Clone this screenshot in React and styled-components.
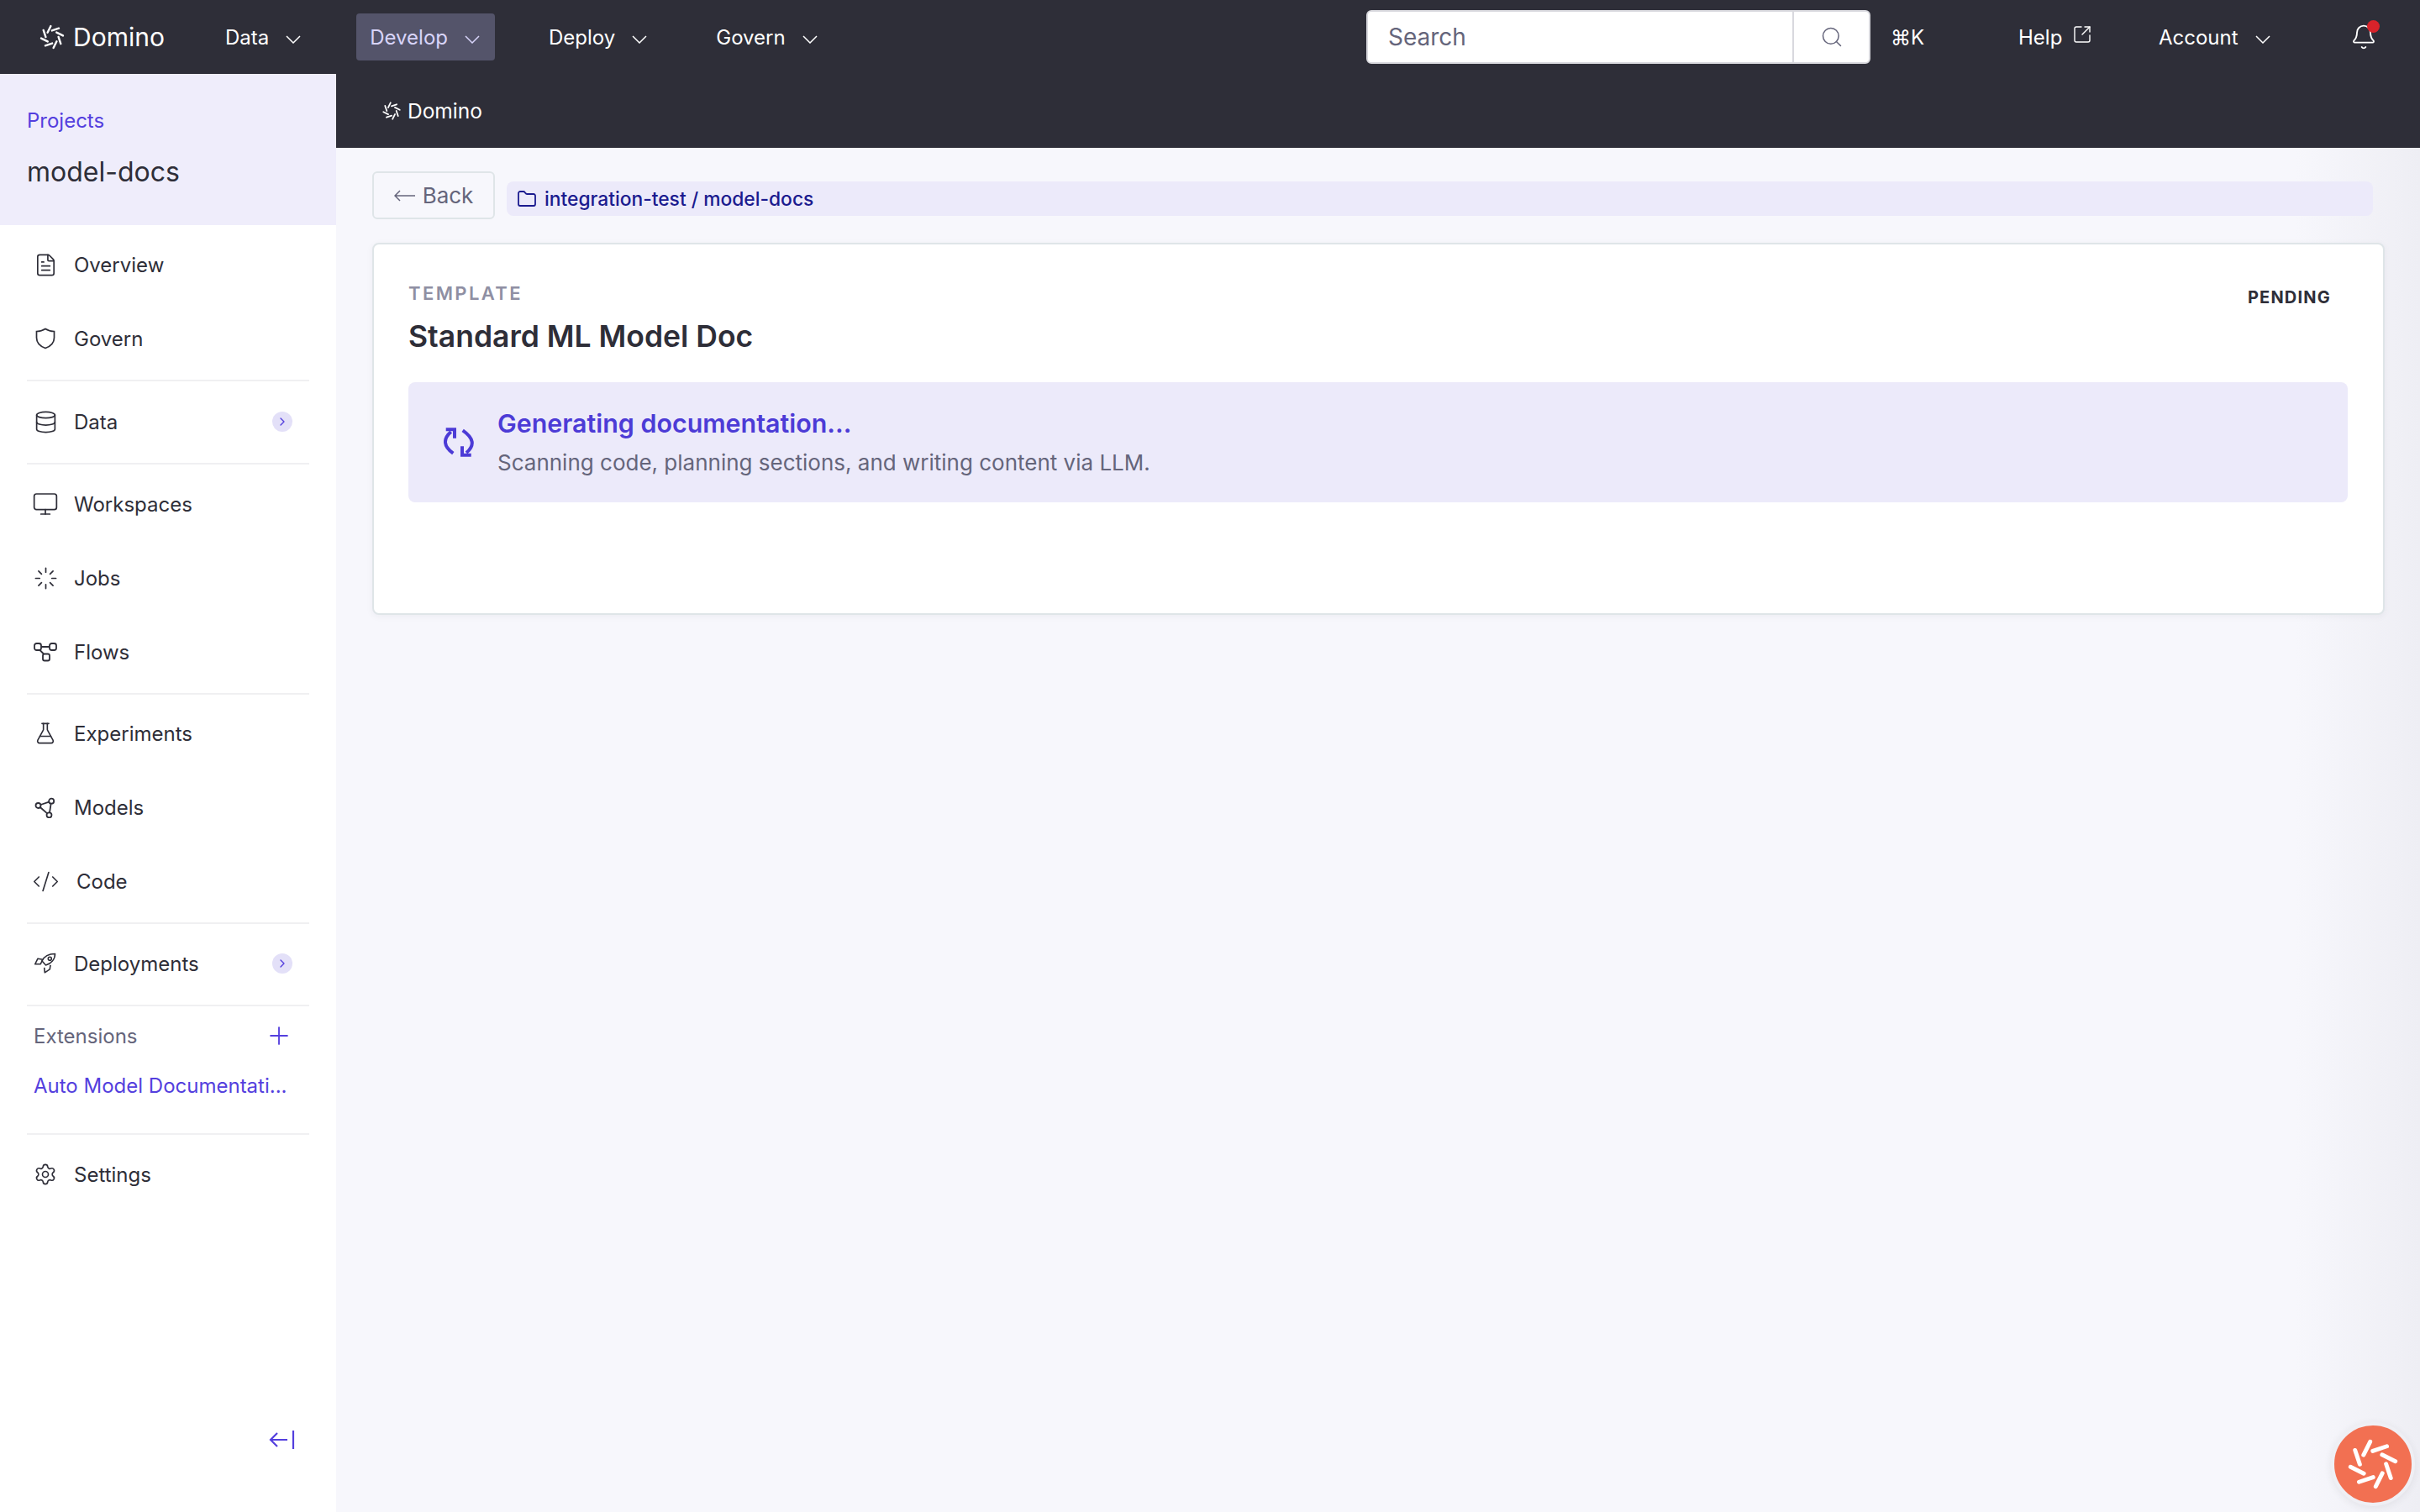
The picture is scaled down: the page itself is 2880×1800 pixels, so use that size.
import React from 'react'
import styled, { createGlobalStyle } from 'styled-components'
import { FileText, Database, Monitor, Loader, FlaskConical, CodeXml, Settings, ChevronRight, Search, Bell, SquareArrowOutUpRight, Folder, Plus } from 'lucide-react'

const GlobalStyle = createGlobalStyle`
  html, body {
    margin: 0;
    padding: 0;
    background: #f7f7fc;
    font-family: Inter, 'Liberation Sans', sans-serif;
    color: #2e2e38;
  }
  * {
    box-sizing: border-box;
  }
`

const Page = styled.div`
  width: 2880px;
  height: 1800px;
  display: flex;
  flex-direction: column;
  overflow: hidden;
  position: relative;
`

const TopBar = styled.header`
  height: 88px;
  flex: none;
  display: flex;
  align-items: center;
  background: #2e2e38;
  color: #fff;
`

const Brand = styled.div`
  width: 236px;
  padding-left: 46px;
  display: flex;
  align-items: center;
  gap: 9px;
  font-size: 30px;
`

const MainNav = styled.nav`
  display: flex;
  align-items: center;
  gap: 48px;
  margin-left: 16px;
`

const NavItem = styled.div`
  height: 56px;
  padding: 0 18px 0 16px;
  display: flex;
  align-items: center;
  gap: 20px;
  font-size: 24px;
  border-radius: 4px;
  background: ${(p) => (p.$active ? '#54546a' : 'transparent')};
  color: ${(p) => (p.$active ? '#d8d4fa' : '#fff')};
`

const CaretSvg = styled.svg`
  width: 18px;
  height: 10px;
  margin-top: 5px;
  flex: none;
`

const SearchBox = styled.div`
  position: absolute;
  left: 1626px;
  top: 12px;
  width: 600px;
  height: 64px;
  display: flex;
  background: #fff;
  border: 2px solid #d9d9de;
  border-radius: 6px;
`

const SearchText = styled.div`
  flex: 1;
  padding-left: 24px;
  display: flex;
  align-items: center;
  font-size: 28px;
  color: #65657b;
  border-right: 2px solid #d9d9de;
`

const SearchBtn = styled.div`
  width: 89px;
  display: flex;
  align-items: center;
  justify-content: center;
  color: #65657b;
`

const RightNav = styled.div`
  position: absolute;
  left: 2250px;
  top: 0;
  height: 88px;
  width: 600px;
  display: flex;
  align-items: center;
  font-size: 24px;
`

const Hotkey = styled.span`
  width: 152px;
`

const HelpLink = styled.span`
  width: 167px;
  display: flex;
  align-items: flex-start;
  gap: 12px;
  svg {
    margin-top: -1px;
  }
`

const AccountLink = styled.span`
  width: 228px;
  display: flex;
  align-items: center;
  gap: 20px;
`

const BellWrap = styled.span`
  position: relative;
  display: flex;
`

const BellDot = styled.span`
  position: absolute;
  top: -4px;
  right: -3px;
  width: 15px;
  height: 15px;
  border-radius: 50%;
  background: #d8232a;
`

const Body = styled.div`
  flex: 1;
  display: flex;
  min-height: 0;
`

const Sidebar = styled.aside`
  width: 400px;
  flex: none;
  display: flex;
  flex-direction: column;
  background: #fff;
  position: relative;
`

const SideHead = styled.div`
  height: 180px;
  flex: none;
  padding: 40px 32px 0;
  background: #efedfb;
`

const ProjectsLink = styled.div`
  font-size: 24px;
  line-height: 32px;
  color: #543fde;
`

const ProjectName = styled.div`
  margin-top: 24px;
  font-size: 32px;
  line-height: 42px;
`

const SideNav = styled.div`
  padding-top: 3px;
  display: flex;
  flex-direction: column;
`

const SideRow = styled.div`
  height: 88px;
  padding: 0 52px 0 32px;
  display: flex;
  align-items: center;
  font-size: 24px;
`

const SideIcon = styled.span`
  width: 44px;
  margin-right: ${(p) => p.$gap ?? 12}px;
  display: flex;
  justify-content: center;
  color: #2e2e38;
`

const SideLabel = styled.span`
  flex: 1;
`

const Badge = styled.span`
  width: 24px;
  height: 24px;
  border-radius: 50%;
  display: flex;
  align-items: center;
  justify-content: center;
  background: #e3e0f8;
  color: #543fde;
`

const Divider = styled.div`
  height: 2px;
  margin: ${(p) => p.$t ?? 5}px 32px ${(p) => p.$b ?? 3}px;
  background: #f0f0f2;
`

const ExtHead = styled.div`
  height: 44px;
  margin-top: 10px;
  padding: 0 51px 0 40px;
  display: flex;
  align-items: center;
  justify-content: space-between;
  font-size: 24px;
  color: #65657b;
  svg {
    color: #543fde;
  }
`

const ExtLink = styled.div`
  margin-top: 16px;
  padding-left: 40px;
  font-size: 24px;
  line-height: 44px;
  color: #543fde;
`

const CollapseBtn = styled.div`
  position: absolute;
  left: 320px;
  top: 1613px;
  color: #543fde;
  display: flex;
`

const MainCol = styled.main`
  flex: 1;
  min-width: 0;
  display: flex;
  flex-direction: column;
`

const SubBar = styled.div`
  height: 88px;
  flex: none;
  padding-left: 54px;
  display: flex;
  align-items: center;
  gap: 7px;
  background: #2e2e38;
  color: #fff;
  font-size: 24.5px;
`

const Content = styled.div`
  flex: 1;
  padding: 28px 42px 0 43px;
  background: linear-gradient(90deg, #f7f7fc 0, #f7f7fc 94%, #eeeef4 100%);
`

const TopRow = styled.div`
  display: flex;
  gap: 14px;
  margin-right: 14px;
`

const BackBtn = styled.div`
  width: 146px;
  height: 57px;
  flex: none;
  display: flex;
  align-items: center;
  justify-content: center;
  gap: 8px;
  border: 2px solid #dfe5e8;
  border-radius: 6px;
  font-size: 26px;
  color: #65657b;
`

const PathBar = styled.div`
  flex: 1;
  height: 41px;
  margin-top: 12px;
  padding-left: 12px;
  display: flex;
  align-items: center;
  gap: 9px;
  background: #eceafa;
  border-radius: 8px;
  font-size: 22.8px;
  font-weight: 500;
  color: #1b1b8f;
`

const Card = styled.section`
  position: relative;
  height: 443px;
  margin-top: 28px;
  padding: 42px 42px 0 41px;
  background: #fff;
  border: 2px solid #dfe5e8;
  border-radius: 8px;
  box-shadow: 0 2px 8px rgba(46, 46, 56, 0.05);
`

const CardHead = styled.div`
  display: flex;
  justify-content: space-between;
`

const Eyebrow = styled.div`
  font-size: 22px;
  line-height: 32px;
  font-weight: 600;
  letter-spacing: 2.4px;
  color: #8f8fa3;
`

const CardTitle = styled.h1`
  margin: 14px 0 0;
  font-size: 35.5px;
  line-height: 44px;
  font-weight: 600;
`

const Status = styled.div`
  margin: 7px 20px 0 0;
  font-size: 20px;
  line-height: 28px;
  font-weight: 700;
  letter-spacing: 1.2px;
`

const Notice = styled.div`
  height: 143px;
  margin-top: 32px;
  padding-left: 42px;
  display: flex;
  align-items: center;
  gap: 28px;
  background: #eceafa;
  border-radius: 8px;
  color: #4c3bd6;
`

const NoticeTitle = styled.div`
  font-size: 30.4px;
  line-height: 42px;
  font-weight: 600;
`

const NoticeSub = styled.div`
  margin-top: 7px;
  font-size: 26px;
  line-height: 38px;
  color: #65657b;
`

const HelpFab = styled.div`
  position: absolute;
  left: 2774px;
  top: 1693px;
  width: 100px;
  height: 100px;
  display: flex;
  align-items: center;
  justify-content: center;
  border-radius: 50%;
  background: #f27052;
  border: 4px solid #efeff4;
  box-shadow: 0 2px 10px rgba(46, 46, 56, 0.08);
`

const bars = [0, 45, 90, 135, 180, 225, 270, 315]

const Pinwheel = ({ size, color = '#fff' }) => (
  <svg width={size} height={size} viewBox="-100 -100 200 200">
    {bars.map((a) => (
      <line key={a} x1="-34" y1="-33" x2="-10" y2="-81" stroke={color} strokeWidth="15" strokeLinecap="round" transform={`rotate(${a})`} />
    ))}
  </svg>
)

const Caret = () => (
  <CaretSvg viewBox="0 0 18 10" fill="none" stroke="currentColor" strokeWidth="1.5">
    <path d="M1 1l8 8 8-8" />
  </CaretSvg>
)

const ShieldIcon = () => (
  <svg width="24" height="26" viewBox="0 0 24 26" fill="none" stroke="currentColor" strokeWidth="1.7">
    <path d="M12 1.500C15 3.500 19 4.500 22.500 4.500V12C22.500 18.500 17.500 22.500 12 24.500C6.500 22.500 1.500 18.500 1.500 12V4.500C5 4.500 9 3.500 12 1.500Z" />
  </svg>
)

const FlowsIcon = () => (
  <svg width="28" height="23" viewBox="0 0 28 23" fill="none" stroke="currentColor" strokeWidth="1.8">
    <rect x="1" y="1" width="8" height="8" rx="2.500" />
    <rect x="19" y="1" width="8" height="8" rx="2.500" />
    <rect x="11" y="13.500" width="8" height="8" rx="2" />
    <path d="M9 5h10M7.500 9l4.500 4.500" />
  </svg>
)

const ModelsIcon = () => (
  <svg width="26" height="26" viewBox="0 0 26 26" fill="none" stroke="currentColor" strokeWidth="1.8">
    <circle cx="4.500" cy="11" r="3" />
    <circle cx="20.200" cy="5.700" r="3" />
    <circle cx="17.500" cy="22.300" r="3" />
    <path d="M7.400 10 17.400 6.600M6.800 13l8.400 7.400M19.700 8.700l-1.700 10.600" />
  </svg>
)

const RocketIcon = () => (
  <svg width="26" height="26" viewBox="-1 0 26 25" fill="none" stroke="currentColor" strokeWidth="1.6" strokeLinejoin="round">
    <path d="M23.500 1C17 1 11 3 8 9.500L12.500 14.500C19 12.500 23.500 7.500 23.500 1Z" />
    <circle cx="17.300" cy="6.700" r="2" />
    <path d="M3 6.700-.3 13.300H6.300L8.700 7.700Z" />
    <path d="M10.700 17.300 11.300 23.300 17.300 19.300 18 14.300" />
  </svg>
)

const SyncIcon = () => (
  <svg width="36" height="36" viewBox="0 0 36 36" fill="none" stroke="currentColor" strokeWidth="4">
    <path d="M11.300 30.700Q-6 18 8.700 5" />
    <path d="M2.700 2.300H13V12.700" />
    <path d="M22.700 3.300Q42.500 17 27 30" />
    <path d="M32.700 32.700H22V22.300" />
  </svg>
)

const CollapseIcon = () => (
  <svg width="32" height="26" viewBox="0 0 32 26" fill="none" stroke="currentColor" strokeWidth="2.2">
    <path d="M2 13h20M10 5l-8 8 8 8M29 2v22" />
  </svg>
)

const BackArrow = () => (
  <svg width="26" height="14" viewBox="0 0 26 14" fill="none" stroke="currentColor" strokeWidth="1.5">
    <path d="M1 7h24M7 1 1 7l6 6" />
  </svg>
)

const SideItem = ({ icon, label, more, gap }) => (
  <SideRow>
    <SideIcon $gap={gap}>{icon}</SideIcon>
    <SideLabel>{label}</SideLabel>
    {more && (
      <Badge>
        <ChevronRight size={16} strokeWidth={2} />
      </Badge>
    )}
  </SideRow>
)

const App = () => {
  return (
    <Page>
      <GlobalStyle />
      <TopBar>
        <Brand>
          <Pinwheel size={32} />
          Domino
        </Brand>
        <MainNav>
          <NavItem>Data <Caret /></NavItem>
          <NavItem $active>Develop <Caret /></NavItem>
          <NavItem>Deploy <Caret /></NavItem>
          <NavItem>Govern <Caret /></NavItem>
        </MainNav>
        <SearchBox>
          <SearchText>Search</SearchText>
          <SearchBtn>
            <Search size={28} strokeWidth={1.3} />
          </SearchBtn>
        </SearchBox>
        <RightNav>
          <Hotkey>⌘K</Hotkey>
          <HelpLink>
            Help <SquareArrowOutUpRight size={24} strokeWidth={1.4} />
          </HelpLink>
          <AccountLink>
            Account <Caret />
          </AccountLink>
          <BellWrap>
            <Bell size={32} strokeWidth={1.4} />
            <BellDot />
          </BellWrap>
        </RightNav>
      </TopBar>
      <Body>
        <Sidebar>
          <SideHead>
            <ProjectsLink>Projects</ProjectsLink>
            <ProjectName>model-docs</ProjectName>
          </SideHead>
          <SideNav>
            <SideItem icon={<FileText size={29} strokeWidth={1.4} />} label="Overview" />
            <SideItem icon={<ShieldIcon />} label="Govern" />
            <Divider $b={4} />
            <SideItem icon={<Database size={29} strokeWidth={1.4} />} label="Data" more />
            <Divider />
            <SideItem icon={<Monitor size={32} strokeWidth={1.3} />} label="Workspaces" />
            <SideItem icon={<Loader size={29} strokeWidth={1.4} />} label="Jobs" />
            <SideItem icon={<FlowsIcon />} label="Flows" />
            <Divider $b={2} />
            <SideItem icon={<FlaskConical size={28} strokeWidth={1.4} />} label="Experiments" />
            <SideItem icon={<ModelsIcon />} label="Models" />
            <SideItem icon={<CodeXml size={33} strokeWidth={1.2} />} label="Code" gap={15} />
            <Divider />
            <SideItem icon={<RocketIcon />} label="Deployments" more />
            <Divider />
            <ExtHead>
              Extensions
              <Plus size={34} strokeWidth={1.3} />
            </ExtHead>
            <ExtLink>Auto Model Documentati...</ExtLink>
            <Divider $t={34} />
            <SideItem icon={<Settings size={28} strokeWidth={1.4} />} label="Settings" />
          </SideNav>
          <CollapseBtn>
            <CollapseIcon />
          </CollapseBtn>
        </Sidebar>
        <MainCol>
          <SubBar>
            <Pinwheel size={24} />
            Domino
          </SubBar>
          <Content>
            <TopRow>
              <BackBtn>
                <BackArrow />
                Back
              </BackBtn>
              <PathBar>
                <Folder size={24} strokeWidth={1.8} />
                integration-test / model-docs
              </PathBar>
            </TopRow>
            <Card>
              <CardHead>
                <div>
                  <Eyebrow>TEMPLATE</Eyebrow>
                  <CardTitle>Standard ML Model Doc</CardTitle>
                </div>
                <Status>PENDING</Status>
              </CardHead>
              <Notice>
                <SyncIcon />
                <div>
                  <NoticeTitle>Generating documentation...</NoticeTitle>
                  <NoticeSub>Scanning code, planning sections, and writing content via LLM.</NoticeSub>
                </div>
              </Notice>
            </Card>
          </Content>
        </MainCol>
      </Body>
      <HelpFab>
        <Pinwheel size={66} />
      </HelpFab>
    </Page>
  )
}

export default App
